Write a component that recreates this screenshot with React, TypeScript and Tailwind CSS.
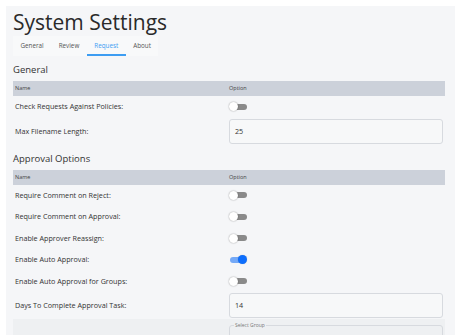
import { useState } from 'react';

type Row = { label: string; kind: 'toggle' | 'input' | 'select'; value?: string; on?: boolean };

const general: Row[] = [
  { label: 'Check Requests Against Policies:', kind: 'toggle', on: false },
  { label: 'Max Filename Length:', kind: 'input', value: '25' },
];

const approval: Row[] = [
  { label: 'Require Comment on Reject:', kind: 'toggle', on: false },
  { label: 'Require Comment on Approval:', kind: 'toggle', on: false },
  { label: 'Enable Approver Reassign:', kind: 'toggle', on: false },
  { label: 'Enable Auto Approval:', kind: 'toggle', on: true },
  { label: 'Enable Auto Approval for Groups:', kind: 'toggle', on: false },
  { label: 'Days To Complete Approval Task:', kind: 'input', value: '14' },
  { label: 'Default Group for Approval:', kind: 'select' },
];

function Toggle({ on }: { on?: boolean }) {
  const [checked, setChecked] = useState(!!on);
  return (
    <button
      onClick={() => setChecked(!checked)}
      className="relative flex h-[10px] w-[18px] items-center"
    >
      <span
        className={
          checked
            ? 'absolute left-[1px] h-[6px] w-[15px] rounded-full bg-[#74a9f7]'
            : 'absolute left-[3px] h-[6px] w-[15px] rounded-full bg-[#8a8a8a]'
        }
      />
      <span
        className={
          checked
            ? 'absolute left-[9px] h-[9px] w-[9px] rounded-full bg-[#0d6efd] shadow-[0_0_1px_rgba(0,0,0,0.3)]'
            : 'absolute left-0 h-[9px] w-[9px] rounded-full bg-white shadow-[0_0_1.5px_rgba(0,0,0,0.45)]'
        }
      />
    </button>
  );
}

function Section({ title, rows }: { title: string; rows: Row[] }) {
  return (
    <div>
      <h2 className="h-[25px] pt-[6px] text-[9.5px] leading-[15px] text-[#333]">{title}</h2>
      <div className="grid h-[15px] grid-cols-2 items-center bg-[#ccd1da] px-[2px] text-[5.5px] text-[#444]">
        <span>Name</span>
        <span>Option</span>
      </div>
      {rows.map((r) => (
        <div
          key={r.label}
          className={
            r.kind === 'select'
              ? 'grid h-[40px] grid-cols-2 items-start bg-[#eef0f2] px-[2px] pt-[3px]'
              : r.kind === 'input'
                ? 'grid h-[27px] grid-cols-2 items-center px-[2px]'
                : 'grid h-[21.5px] grid-cols-2 items-center px-[2px]'
          }
        >
          <span
            className={
              r.kind === 'select'
                ? 'pt-[10px] text-[7.2px] text-[#333]'
                : 'text-[7.2px] text-[#333]'
            }
          >
            {r.label}
          </span>
          {r.kind === 'toggle' && <Toggle on={r.on} />}
          {r.kind === 'input' && (
            <div className="flex h-[25px] items-center rounded-[3px] border border-[#d7dadf] bg-[#f7f8f9] px-[5px] text-[7.2px] text-[#333]">
              {r.value}
            </div>
          )}
          {r.kind === 'select' && (
            <fieldset className="h-[30px] rounded-[3px] border border-[#d7dadf] px-[4px]">
              <legend className="px-[1px] text-[5px] leading-[6px] text-[#777]">Select Group</legend>
            </fieldset>
          )}
        </div>
      ))}
    </div>
  );
}

export default function App() {
  const tabs = ['General', 'Review', 'Request', 'About'];
  const [active, setActive] = useState('Request');

  return (
    <div className="h-[335px] overflow-hidden bg-white pl-[6px] pt-[6px] font-['Open_Sans',sans-serif]">
      <div className="h-[400px] bg-[#f5f6f8] pl-[7px] pr-[10px]">
        <h1 className="h-[30px] pt-[1px] text-[21px] leading-[30px] text-[#2a2a2a]">System Settings</h1>
        <div className="flex h-[20px] w-fit items-stretch bg-[#f8f9fa]">
          {tabs.map((t) => (
            <button
              key={t}
              onClick={() => setActive(t)}
              className={
                t === active
                  ? 'border-b-2 border-[#3d9df2] px-[7.5px] pt-[1px] text-[6.3px] text-[#3d9df2]'
                  : 'border-b-2 border-transparent px-[7.5px] pt-[1px] text-[6.3px] text-[#555]'
              }
            >
              {t}
            </button>
          ))}
        </div>
        <Section title="General" rows={general} />
        <Section title="Approval Options" rows={approval} />
      </div>
    </div>
  );
}
